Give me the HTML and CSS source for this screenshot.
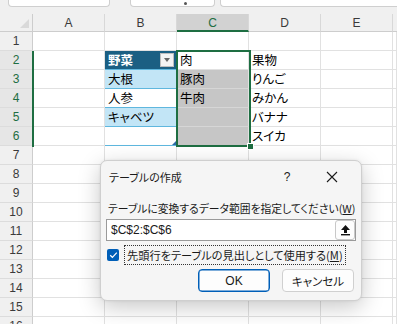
FILE: index.html
```html
<!DOCTYPE html>
<html lang="ja">
<head>
<meta charset="utf-8">
<link rel="stylesheet" href="styles.css">
</head>
<body>
<div class="app">
  <div class="topbar">
    <div class="tb tb-name"></div>
    <div class="tb tb-mid"><span class="tb-dot"></span></div>
    <div class="tb tb-formula"></div>
  </div>
  <div class="sheet">
    <div class="corner"><span class="corner-tri"></span></div>
    <div class="ch">A</div><div class="ch">B</div><div class="ch ch-sel">C</div><div class="ch">D</div><div class="ch">E</div><div class="ch ch-f"></div>

    <div class="rh">1</div><div class="c"></div><div class="c"></div><div class="c"></div><div class="c"></div><div class="c"></div><div class="c"></div>

    <div class="rh rh-sel">2</div><div class="c"></div><div class="c t-head">野菜<span class="dd"><span class="dd-tri"></span></span></div><div class="c c-active">肉</div><div class="c">果物</div><div class="c"></div><div class="c"></div>

    <div class="rh rh-sel">3</div><div class="c"></div><div class="c t-band">大根</div><div class="c c-sel">豚肉</div><div class="c">りんご</div><div class="c"></div><div class="c"></div>

    <div class="rh rh-sel">4</div><div class="c"></div><div class="c t-row">人参</div><div class="c c-sel">牛肉</div><div class="c">みかん</div><div class="c"></div><div class="c"></div>

    <div class="rh rh-sel">5</div><div class="c"></div><div class="c t-band">キャベツ</div><div class="c c-sel"></div><div class="c">バナナ</div><div class="c"></div><div class="c"></div>

    <div class="rh rh-sel">6</div><div class="c"></div><div class="c t-row t-last"><span class="t-resize"></span></div><div class="c c-sel"></div><div class="c">スイカ</div><div class="c"></div><div class="c"></div>

    <div class="rh">7</div><div class="c"></div><div class="c"></div><div class="c"></div><div class="c"></div><div class="c"></div><div class="c"></div>
    <div class="rh">8</div><div class="c"></div><div class="c"></div><div class="c"></div><div class="c"></div><div class="c"></div><div class="c"></div>
    <div class="rh">9</div><div class="c"></div><div class="c"></div><div class="c"></div><div class="c"></div><div class="c"></div><div class="c"></div>
    <div class="rh">10</div><div class="c"></div><div class="c"></div><div class="c"></div><div class="c"></div><div class="c"></div><div class="c"></div>
    <div class="rh">11</div><div class="c"></div><div class="c"></div><div class="c"></div><div class="c"></div><div class="c"></div><div class="c"></div>
    <div class="rh">12</div><div class="c"></div><div class="c"></div><div class="c"></div><div class="c"></div><div class="c"></div><div class="c"></div>
    <div class="rh">13</div><div class="c"></div><div class="c"></div><div class="c"></div><div class="c"></div><div class="c"></div><div class="c"></div>
    <div class="rh">14</div><div class="c"></div><div class="c"></div><div class="c"></div><div class="c"></div><div class="c"></div><div class="c"></div>
    <div class="rh">15</div><div class="c"></div><div class="c"></div><div class="c"></div><div class="c"></div><div class="c"></div><div class="c"></div>
    <div class="rh">16</div><div class="c"></div><div class="c"></div><div class="c"></div><div class="c"></div><div class="c"></div><div class="c"></div>
  </div>

  <div class="rowsel-line"></div>
  <div class="selbox"><span class="fill-handle"></span></div>

  <div class="dialog">
    <div class="dlg-title">
      <span class="dlg-title-text">テーブルの作成</span>
      <span class="dlg-help">?</span>
      <span class="dlg-close">
        <svg width="12" height="12" viewBox="0 0 12 12"><path d="M1 1 L11 11 M11 1 L1 11" stroke="#1a1a1a" stroke-width="1.1" fill="none"/></svg>
      </span>
    </div>
    <div class="dlg-label">テーブルに変換するデータ範囲を指定してください(<u>W</u>)</div>
    <div class="dlg-input">
      <span class="dlg-input-text">$C$2:$C$6</span>
      <span class="dlg-upbtn">
        <svg width="11" height="12" viewBox="0 0 11 12"><path d="M5.5 1 L10 6 L7 6 L7 9 L4 9 L4 6 L1 6 Z" fill="#111"/><rect x="1" y="10" width="9" height="1.4" fill="#111"/></svg>
      </span>
    </div>
    <div class="dlg-check-row">
      <span class="chk">
        <svg width="9" height="8" viewBox="0 0 9 8"><path d="M1.2 4.2 L3.4 6.3 L7.8 1.6" stroke="#fff" stroke-width="1.2" fill="none"/></svg>
      </span>
      <span class="chk-label">先頭行をテーブルの見出しとして使用する(<u>M</u>)</span>
    </div>
    <div class="dlg-buttons">
      <button class="btn btn-ok">OK</button>
      <button class="btn">キャンセル</button>
    </div>
  </div>
</div>
</body>
</html>
```
FILE: styles.css
```css
html, body {
  margin: 0;
  padding: 0;
  background: #ffffff;
}
body {
  width: 397px;
  height: 324px;
  overflow: hidden;
  font-family: "Noto Sans CJK JP", "Noto Sans", sans-serif;
}
.app {
  position: relative;
  width: 397px;
  height: 324px;
  overflow: hidden;
}
.topbar {
  height: 14px;
  background: #f0f0f0;
  display: flex;
  align-items: flex-start;
}
.tb {
  background: #fff;
  border: 1px solid #cfcfcf;
  border-top: none;
  border-radius: 0 0 4px 4px;
  box-sizing: border-box;
  height: 7px;
}
.tb-name { margin-left: 8px; width: 102px; }
.tb-mid { margin-left: 20px; width: 85px; position: relative; }
.tb-dot {
  position: absolute;
  left: 53px;
  top: 2px;
  width: 3px;
  height: 3px;
  background: #555;
  border-radius: 50%;
}
.tb-formula { margin-left: 5px; flex: 1; border-right: none; border-radius: 0 0 0 4px; }

.sheet {
  display: grid;
  grid-template-columns: 33px 72px 72px 72px 72px 72px 1fr;
  grid-template-rows: 18px;
  grid-auto-rows: 19px;
  font-family: "Noto Sans CJK JP", sans-serif;
  font-feature-settings: "palt";
  font-size: 12.5px;
  color: #000;
}
.corner, .ch, .rh {
  background: #f0f0f0;
  box-sizing: border-box;
  font-family: "Liberation Sans", "Noto Sans", sans-serif;
  color: #3a3a3a;
}
.corner {
  border-right: 1px solid #cdcdcd;
  border-bottom: 1px solid #cdcdcd;
  position: relative;
}
.corner-tri {
  position: absolute;
  right: 3px;
  bottom: 3px;
  width: 0;
  height: 0;
  border-left: 9px solid transparent;
  border-bottom: 9px solid #d9d9d9;
}
.ch {
  border-right: 1px solid #d8d8d8;
  border-bottom: 1px solid #cdcdcd;
  display: flex;
  align-items: center;
  justify-content: center;
  font-size: 12px;
  padding-top: 1px;
}
.ch-sel {
  background: #d2d2d2;
  color: #1e6e42;
  border-bottom: 2px solid #1e6e42;
}
.ch-f { border-right: none; }
.rh {
  border-right: 1px solid #cdcdcd;
  border-bottom: 1px solid #dcdcdc;
  display: flex;
  align-items: center;
  justify-content: center;
  font-size: 12px;
}
.rh-sel {
  background: #e6e6e6;
  color: #1e6e42;
}
.c {
  box-sizing: border-box;
  border-right: 1px solid #e1e1e1;
  border-bottom: 1px solid #e1e1e1;
  display: flex;
  align-items: center;
  padding-left: 3px;
  white-space: nowrap;
  overflow: hidden;
  line-height: 1;
}
.t-head {
  background: #1b5f83;
  color: #fff;
  font-weight: 700;
  border-right: 1px solid #5fb7de;
  border-bottom: 1px solid #5fb7de;
  position: relative;
}
.dd {
  position: absolute;
  right: 2px;
  top: 2px;
  width: 14px;
  height: 14px;
  background: #f3f3f3;
  border: 1px solid #bdbdbd;
  box-sizing: border-box;
  display: flex;
  align-items: center;
  justify-content: center;
}
.dd-tri {
  width: 0;
  height: 0;
  border-left: 3.5px solid transparent;
  border-right: 3.5px solid transparent;
  border-top: 4px solid #666;
}
.t-band {
  background: #c2e5f6;
  border-right: 1px solid #5fb7de;
  border-bottom: 1px solid #5fb7de;
}
.t-row {
  background: #fff;
  border-right: 1px solid #5fb7de;
  border-bottom: 1px solid #5fb7de;
}
.t-last { position: relative; }
.t-resize {
  position: absolute;
  right: 0;
  bottom: 0;
  width: 0;
  height: 0;
  border-left: 4px solid transparent;
  border-bottom: 4px solid #2f6aa5;
}
.c-active { background: #fff; }
.c-sel { background: #c6c6c6; border-bottom-color: #d6d6d6; }

.rowsel-line {
  position: absolute;
  left: 32px;
  top: 51px;
  width: 2px;
  height: 96px;
  background: #1e6e42;
}
.selbox {
  position: absolute;
  left: 176px;
  top: 50px;
  width: 75px;
  height: 97px;
  border: 2px solid #1e6e42;
  box-sizing: border-box;
}
.fill-handle {
  position: absolute;
  right: -5px;
  bottom: -5px;
  width: 5px;
  height: 5px;
  background: #1e6e42;
  border: 1px solid #fff;
}

.dialog {
  position: absolute;
  left: 100px;
  top: 160px;
  width: 262px;
  height: 141px;
  box-sizing: border-box;
  background: #f5f5f5;
  border: 1px solid #cfcfcf;
  border-radius: 7px;
  box-shadow: 0 6px 22px rgba(0, 0, 0, 0.22), 0 0 3px rgba(0, 0, 0, 0.08);
  font-family: "Noto Sans CJK JP", sans-serif;
  font-feature-settings: "palt";
  font-size: 11px;
  color: #1a1a1a;
  display: flex;
  flex-direction: column;
  padding: 0 6px 0 5px;
}
.dlg-title {
  height: 29px;
  display: flex;
  align-items: center;
  padding-left: 3px;
  padding-top: 1px;
}
.dlg-title-text { flex: 1; }
.dlg-help {
  width: 12px;
  text-align: center;
  font-family: "Liberation Sans", sans-serif;
  font-size: 12px;
  margin-right: 33px;
}
.dlg-close {
  width: 12px;
  height: 12px;
  display: flex;
  margin-right: 17px;
}
.dlg-label {
  margin-top: 9px;
  padding-left: 2px;
  height: 16px;
  line-height: 16px;
  white-space: nowrap;
  font-size: 10.8px;
}
.dlg-input {
  margin-top: 3px;
  height: 22px;
  width: 250px;
  box-sizing: border-box;
  background: #fff;
  border: 1px solid #9a9a9a;
  display: flex;
  align-items: center;
  justify-content: space-between;
}
.dlg-input-text {
  font-family: "Liberation Sans", sans-serif;
  font-size: 12px;
  padding-left: 4px;
}
.dlg-upbtn {
  width: 20px;
  height: 20px;
  box-sizing: border-box;
  border: 1px solid #c8c8c8;
  border-radius: 3px;
  background: #fdfdfd;
  display: flex;
  align-items: center;
  justify-content: center;
}
.dlg-check-row {
  margin-top: 4px;
  height: 20px;
  display: flex;
  align-items: center;
  gap: 5px;
  padding-left: 1px;
}
.chk {
  width: 12px;
  height: 12px;
  background: #005fb8;
  border-radius: 2px;
  display: flex;
  align-items: center;
  justify-content: center;
}
.chk-label {
  border: 1px dotted #333;
  height: 20px;
  box-sizing: border-box;
  display: flex;
  align-items: center;
  padding: 0 2px;
  font-size: 11.2px;
  white-space: nowrap;
}
.dlg-buttons {
  margin-top: 4px;
  display: flex;
  justify-content: flex-end;
  gap: 12px;
  padding-right: 1px;
}
.btn {
  width: 72px;
  height: 23px;
  box-sizing: border-box;
  background: #fdfdfd;
  border: 1px solid #d0d0d0;
  border-radius: 4px;
  font-family: "Noto Sans CJK JP", sans-serif;
  font-feature-settings: "palt";
  font-size: 11.5px;
  color: #1a1a1a;
  padding: 0;
}
.btn-ok {
  border: 1px solid #005fb8;
  box-shadow: inset 0 0 0 0.5px #005fb8;
  font-family: "Liberation Sans", sans-serif;
  font-size: 12px;
}
```
